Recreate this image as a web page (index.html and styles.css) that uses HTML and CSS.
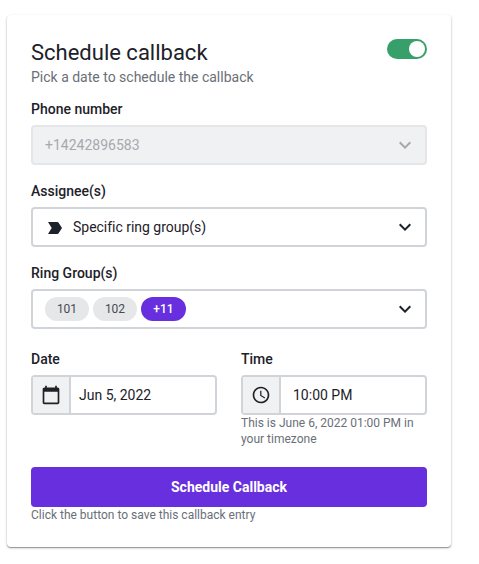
FILE: index.html
```html
<!DOCTYPE html>
<html lang="en">
<head>
<meta charset="utf-8">
<title>Schedule callback</title>
<link rel="stylesheet" href="styles.css">
</head>
<body>
<main class="card">
  <header class="header">
    <div>
      <h1 class="title">Schedule callback</h1>
      <p class="subtitle">Pick a date to schedule the callback</p>
    </div>
    <span class="toggle"><span class="knob"></span></span>
  </header>

  <section class="field">
    <div class="label">Phone number</div>
    <div class="control disabled">
      <span class="phone">+14242896583</span>
      <svg class="chevron" viewBox="0 0 24 24"><path d="M7.41 8.59 12 13.17l4.59-4.58L18 10l-6 6-6-6z"/></svg>
    </div>
  </section>

  <section class="field">
    <div class="label">Assignee(s)</div>
    <div class="control">
      <svg class="tag" viewBox="0 0 14 12"><path d="M0 0h9.3q.8 0 1.3.7L14 6l-3.400 5.300q-.5.7-1.300.7H0l3.700-6z"/></svg>
      <span class="assignee">Specific ring group(s)</span>
      <svg class="chevron" viewBox="0 0 24 24"><path d="M7.41 8.59 12 13.17l4.59-4.58L18 10l-6 6-6-6z"/></svg>
    </div>
  </section>

  <section class="field">
    <div class="label">Ring Group(s)</div>
    <div class="control">
      <div class="chips">
        <span class="chip">101</span>
        <span class="chip">102</span>
        <span class="chip more">+11</span>
      </div>
      <svg class="chevron" viewBox="0 0 24 24"><path d="M7.41 8.59 12 13.17l4.59-4.58L18 10l-6 6-6-6z"/></svg>
    </div>
  </section>

  <div class="row">
    <section>
      <div class="label">Date</div>
      <div class="picker">
        <span class="addon"><svg viewBox="0 0 24 24"><path d="M20 3h-1V1h-2v2H7V1H5v2H4c-1.100 0-2 .9-2 2v16c0 1.100.9 2 2 2h16c1.100 0 2-.9 2-2V5c0-1.100-.9-2-2-2zm0 18H4V8h16v13z"/></svg></span>
        <span class="value date">Jun 5, 2022</span>
      </div>
    </section>
    <section>
      <div class="label">Time</div>
      <div class="picker">
        <span class="addon"><svg viewBox="0 0 24 24"><path d="M11.990 2C6.470 2 2 6.480 2 12s4.470 10 9.990 10C17.520 22 22 17.520 22 12S17.520 2 11.990 2zM12 20c-4.420 0-8-3.580-8-8s3.580-8 8-8 8 3.580 8 8-3.580 8-8 8zM12.500 7H11v6l5.250 3.150.75-1.230-4.500-2.670z"/></svg></span>
        <span class="value time">10:00 PM</span>
      </div>
      <p class="hint">This is June 6, 2022 01:00 PM in your timezone</p>
    </section>
  </div>

  <button class="submit" type="button">Schedule Callback</button>
  <p class="hint">Click the button to save this callback entry</p>
</main>
</body>
</html>
```
FILE: styles.css
```css
* { box-sizing: border-box; }

body {
  margin: 0;
  padding: 15px 28px 17px 7px;
  background: #fff;
  color: #1d2129;
  font: 14px/20px Roboto, sans-serif;
}

h1, p { margin: 0; }

svg { display: block; fill: currentColor; }

.card {
  height: 532px;
  padding: 24px;
  border-radius: 4px;
  background: #fff;
  box-shadow: 0 1px 1px rgba(0, 0, 0, .32), 0 1px 3px rgba(0, 0, 0, .2);
}

.header {
  display: flex;
  justify-content: space-between;
  align-items: flex-start;
  margin-bottom: 12px;
}

.title {
  font-size: 22px;
  line-height: 28px;
  font-weight: 400;
}

.subtitle { color: #6a6f78; }

.toggle {
  display: flex;
  justify-content: flex-end;
  width: 40px;
  height: 20px;
  padding: 2px;
  border-radius: 10px;
  background: #379f69;
}

.knob {
  width: 16px;
  height: 16px;
  border-radius: 50%;
  background: #fff;
}

.field { margin-bottom: 16px; }

.label {
  margin-bottom: 6px;
  font-weight: 500;
}

.control {
  display: flex;
  align-items: center;
  height: 40px;
  padding: 0 8px 0 12px;
  border: 2px solid #d0d4d9;
  border-radius: 4px;
}

.disabled {
  border-color: #e4e6e8;
  background: #f0f1f3;
  color: #a5a9ae;
}

.chevron {
  width: 24px;
  height: 24px;
  margin-left: auto;
}

.tag {
  width: 14px;
  height: 12px;
  margin: 1px 11px 0 3px;
}

.assignee { letter-spacing: -.02px; }

.chips { display: flex; gap: 4px; }

.chip {
  width: 44px;
  height: 24px;
  border-radius: 12px;
  background: #e5e7e9;
  color: #454b53;
  font-size: 12px;
  line-height: 24px;
  font-weight: 400;
  text-align: center;
}

.more {
  width: 45px;
  background: #672fdd;
  color: #fff;
  font-weight: 500;
}

.row {
  display: grid;
  grid-template-columns: 186px 186px;
  gap: 24px;
  margin: 20px 0;
}

.picker {
  display: flex;
  height: 40px;
  border: 2px solid #d0d4d9;
  border-radius: 4px;
}

.addon {
  display: flex;
  align-items: center;
  justify-content: center;
  width: 38px;
  border-right: 2px solid #d0d4d9;
  background: #f0f1f3;
}

.addon svg { width: 20px; height: 20px; }

.value { line-height: 36px; }
.date { padding-left: 8px; }
.time { padding-left: 12px; }

.hint {
  color: #6a6f78;
  font-size: 12px;
  line-height: 16px;
}

.submit {
  display: block;
  width: 100%;
  height: 40px;
  padding: 0;
  border: 0;
  border-radius: 4px;
  background: #672fdd;
  color: #fff;
  font: 700 14px/40px Roboto, sans-serif;
}
```
